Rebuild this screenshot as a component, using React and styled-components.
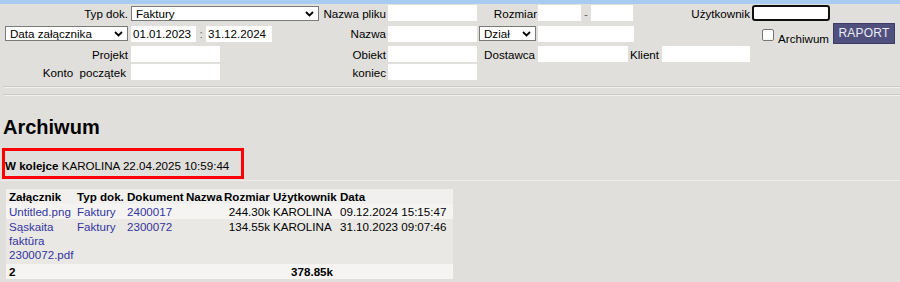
import React from 'react';
import styled, { createGlobalStyle, css } from 'styled-components';

const GlobalStyle = createGlobalStyle`
  html, body {
    margin: 0;
    padding: 0;
    background: #e0dfdb;
  }
  body {
    font-family: "Liberation Sans", Arial, sans-serif;
    font-size: 11.6px;
    color: #000;
  }
`;

const Page = styled.div`
  width: 900px;
  height: 282px;
  overflow: hidden;
  background: #e0dfdb;
`;

const TopBar = styled.div`
  height: 4px;
  background: #a8cbf1;
`;

const Form = styled.div`
  display: flex;
  flex-direction: column;
`;

const Row = styled.div`
  display: flex;
  align-items: center;
  height: ${p => p.h || 18}px;
  padding-left: 3px;
`;

const Cell = styled.div`
  flex: none;
  width: ${p => p.w}px;
  box-sizing: border-box;
  display: flex;
  align-items: ${p => p.bottom ? 'flex-end' : 'center'};
  justify-content: ${p => p.right ? 'flex-end' : 'flex-start'};
  padding-right: ${p => p.pr || 0}px;
  padding-left: ${p => p.pl || 0}px;
  white-space: pre;
`;

const Label = styled.span`
  margin-left: ${p => p.ml || 0}px;
  margin-right: ${p => p.mr || 0}px;
`;

const Field = styled.input`
  flex: none;
  width: ${p => p.w}px;
  height: 16px;
  box-sizing: border-box;
  margin: 0 0 0 ${p => p.ml || 0}px;
  padding: 0 2px;
  border: none;
  background: #fff;
  font: inherit;
  color: #000;
  outline: none;
  ${p => p.focused && css`
    border: 2px solid #111;
    border-radius: 3px;
  `}
`;

const Sep = styled.span`
  flex: none;
  width: ${p => p.w}px;
  text-align: center;
  color: #666;
`;

const SelectWrap = styled.div`
  position: relative;
  flex: none;
  width: ${p => p.w}px;
  height: 15px;
`;

const Select = styled.select`
  appearance: none;
  width: 100%;
  height: 100%;
  box-sizing: border-box;
  margin: 0;
  padding: 0 0 0 4px;
  border: 1px solid #7a7a7a;
  border-radius: 0;
  background: #fff;
  font: inherit;
  color: #000;
  line-height: 13px;
`;

const Chevron = styled.svg`
  position: absolute;
  right: 5px;
  top: 5px;
  pointer-events: none;
`;

const Check = styled.input`
  width: 12px;
  height: 12px;
  margin: 0 4px 4px 0;
  appearance: none;
  border: 1px solid #767676;
  border-radius: 2px;
  background: #fff;
  box-sizing: border-box;
`;

const Button = styled.button`
  width: 62px;
  height: 21px;
  margin-left: 4px;
  margin-bottom: 1px;
  padding: 0;
  border: 1px solid #3c3c66;
  background: #50507e;
  color: #ececf4;
  font-family: "Liberation Sans", Arial, sans-serif;
  font-size: 12px;
  letter-spacing: 0.2px;
`;

const Divider = styled.div`
  margin: ${p => p.mt}px 0 0 3px;
  height: 0;
  border-top: 1px solid #cbc9c4;
  border-bottom: 1px solid #f1f0ed;
  border-left: 1px solid #cbc9c4;
`;

const Heading = styled.h2`
  margin: 19px 0 0 3px;
  font-size: 20px;
  line-height: 24px;
  font-weight: bold;
`;

const Queue = styled.div`
  position: relative;
  margin-top: 9px;
  padding: 11px 0 7px 5px;
  line-height: 14px;
  border-bottom: 1px solid #ecebe7;
`;

const Highlight = styled.div`
  position: absolute;
  left: 2px;
  top: 0;
  width: 242px;
  height: 31px;
  box-sizing: border-box;
  border: 3px solid #ff0000;
`;

const Table = styled.table`
  margin: 8px 0 0 6px;
  width: 447px;
  table-layout: fixed;
  border-collapse: collapse;
  font-size: 11.6px;
  line-height: 14px;
`;

const Tr = styled.tr`
  background: ${p => p.bg};
  vertical-align: top;
`;

const Th = styled.th`
  padding: 1px 2px 0 ${p => p.first ? 3 : 2}px;
  text-align: left;
  font-weight: bold;
  white-space: nowrap;
`;

const Td = styled.td`
  padding: ${p => p.pt || 1}px ${p => p.pr || 2}px ${p => p.pb || 0}px ${p => p.first ? 3 : 2}px;
  text-align: ${p => p.right ? 'right' : 'left'};
  font-weight: ${p => p.bold ? 'bold' : 'normal'};
  white-space: ${p => p.wrap ? 'normal' : 'nowrap'};
`;

const A = styled.a`
  color: #3434a2;
  text-decoration: none;
`;

const Arrow = () => (
  <Chevron width="9" height="6" viewBox="0 0 9 6">
    <path d="M1 1 L4.5 4.5 L8 1" fill="none" stroke="#000" strokeWidth="1.8" />
  </Chevron>
);

const Dropdown = ({ w, value }) => (
  <SelectWrap w={w}>
    <Select defaultValue={value}>
      <option>{value}</option>
    </Select>
    <Arrow />
  </SelectWrap>
);

const rows = [
  { file: 'Untitled.png', type: 'Faktury', doc: '2400017', size: '244.30k', user: 'KAROLINA', date: '09.12.2024 15:15:47', bg: '#f5f4f2' },
  { file: 'Sąskaita faktūra 2300072.pdf', type: 'Faktury', doc: '2300072', size: '134.55k', user: 'KAROLINA', date: '31.10.2023 09:07:46', bg: '#e9e8e4', pb: 2 },
];

export default function App() {
  return (
    <Page>
      <GlobalStyle />
      <TopBar />
      <Form>
        <Row h={18}>
          <Cell w={128} right pr={3}>Typ dok.</Cell>
          <Cell w={189}><Dropdown w={188} value="Faktury" /></Cell>
          <Cell w={68} right pr={2}>Nazwa pliku</Cell>
          <Cell w={91}><Field w={89} /></Cell>
          <Cell w={59} right pr={1}>Rozmiar</Cell>
          <Cell w={96}>
            <Field w={43} />
            <Sep w={10}>-</Sep>
            <Field w={42} />
          </Cell>
          <Cell w={118} right pr={2}>Użytkownik</Cell>
          <Cell w={145}><Field w={78} focused /></Cell>
        </Row>
        <Row h={23}>
          <Cell w={128} pl={2}><Dropdown w={123} value="Data załącznika" /></Cell>
          <Cell w={189}>
            <Field w={65} defaultValue="01.01.2023" />
            <Sep w={10}>:</Sep>
            <Field w={66} defaultValue="31.12.2024" />
          </Cell>
          <Cell w={68} right pr={2}>Nazwa</Cell>
          <Cell w={91}><Field w={89} /></Cell>
          <Cell w={59}><Dropdown w={57} value="Dział" /></Cell>
          <Cell w={96}><Field w={96} /></Cell>
          <Cell w={263} right bottom pr={2}>
            <Check type="checkbox" />
            <Label>Archiwum</Label>
            <Button>RAPORT</Button>
          </Cell>
        </Row>
        <Row h={18}>
          <Cell w={128} right pr={3}>Projekt</Cell>
          <Cell w={189}><Field w={89} /></Cell>
          <Cell w={68} right pr={2}>Obiekt</Cell>
          <Cell w={91}><Field w={89} /></Cell>
          <Cell w={59} right pr={3}>Dostawca</Cell>
          <Cell w={214}>
            <Field w={90} />
            <Label ml={2}>Klient</Label>
            <Field w={88} ml={3} />
          </Cell>
        </Row>
        <Row h={18}>
          <Cell w={128} right pr={5}>Konto  początek</Cell>
          <Cell w={189}><Field w={89} /></Cell>
          <Cell w={68} right pr={2}>koniec</Cell>
          <Cell w={91}><Field w={89} /></Cell>
        </Row>
      </Form>

      <Divider mt={5} />
      <Divider mt={6} />

      <Heading>Archiwum</Heading>

      <Queue>
        <b>W kolejce</b> KAROLINA 22.04.2025 10:59:44
        <Highlight />
      </Queue>

      <Table>
        <colgroup>
          <col style={{ width: 69 }} />
          <col style={{ width: 50 }} />
          <col style={{ width: 59 }} />
          <col style={{ width: 38 }} />
          <col style={{ width: 49 }} />
          <col style={{ width: 67 }} />
          <col style={{ width: 115 }} />
        </colgroup>
        <thead>
          <Tr bg="#f1f0ee">
            <Th first>Załącznik</Th>
            <Th>Typ dok.</Th>
            <Th>Dokument</Th>
            <Th>Nazwa</Th>
            <Th>Rozmiar</Th>
            <Th>Użytkownik</Th>
            <Th>Data</Th>
          </Tr>
        </thead>
        <tbody>
          {rows.map(r => (
            <Tr key={r.doc} bg={r.bg}>
              <Td first wrap pb={r.pb}><A href="#">{r.file}</A></Td>
              <Td pb={r.pb}><A href="#">{r.type}</A></Td>
              <Td pb={r.pb}><A href="#">{r.doc}</A></Td>
              <Td pb={r.pb}></Td>
              <Td right pr={1} pb={r.pb}>{r.size}</Td>
              <Td pb={r.pb}>{r.user}</Td>
              <Td pb={r.pb}>{r.date}</Td>
            </Tr>
          ))}
          <Tr bg="#f5f4f2">
            <Td first bold>2</Td>
            <Td colSpan={4}></Td>
            <Td right bold pr={5}>378.85k</Td>
            <Td></Td>
          </Tr>
        </tbody>
      </Table>
    </Page>
  );
}
